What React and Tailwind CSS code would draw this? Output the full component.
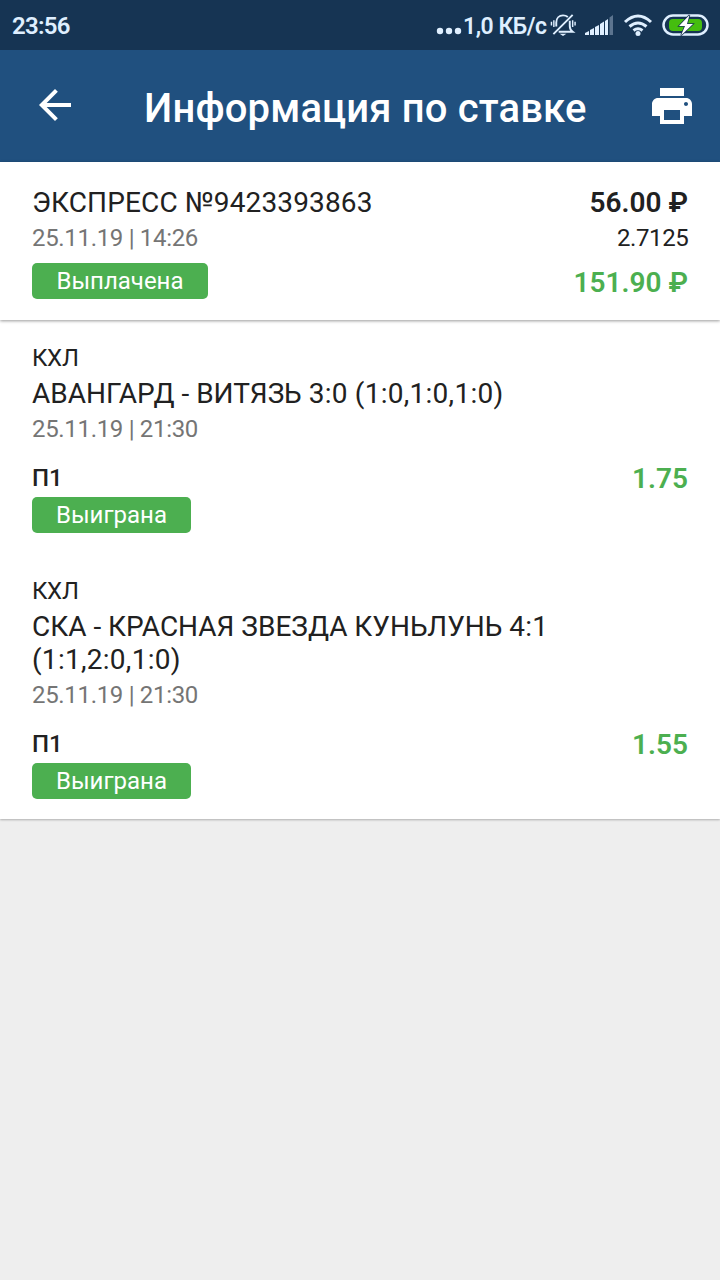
const Status = ({ children, className }) => (
  <span className={`flex h-9 items-center justify-center rounded-[5px] bg-[#4caf50] text-[24px] leading-none text-white ${className}`}>{children}</span>
);

const Event = ({ teams, score, periods, odds, className }) => (
  <section className={`px-8 ${className}`}>
    <div className="text-[24px] leading-7 tracking-[-0.3px]">КХЛ</div>
    <div className="mt-[5px] flex flex-wrap gap-x-[7px] text-[28px] leading-[33px] tracking-[0.28px]">
      <span className="tracking-[-0.01px]">{teams}</span>
      <span>{score}</span>
      <span>{periods}</span>
    </div>
    <div className="mt-[5px] text-[24px] leading-7 tracking-[-0.32px] text-[#757575]">25.11.19 | 21:30</div>
    <div className="mt-[18px] flex h-[34px] items-center justify-between font-medium">
      <span className="text-[24px]">П1</span>
      <span className="pt-[2px] text-[28px] font-semibold text-[#4caf50]">{odds}</span>
    </div>
    <Status className="mt-[2px] w-[159px]">Выиграна</Status>
  </section>
);

const SilentIcon = () => (
  <svg className="ml-[4px]" width="27" height="28" viewBox="0 0 28 28" fill="none" stroke="currentColor" strokeWidth="2">
    <path d="M6.500 15.500V11.500C6.500 7 9.500 4 13.500 4c2 0 3.700.6 5 1.700M20.500 9.500V15c0 2.500 1 4.500 3 6H9M23.500 3.500L3.500 23.500" />
    <path d="M10 23h7l-3.500 2.500z" fill="currentColor" stroke="none" />
    <path d="M4 9v7M1.500 10.500v4M23.500 9v7M26 10.500v4" strokeWidth="1.500" />
  </svg>
);

export default function App() {
  return (
    <div className="flex h-[1280px] w-[720px] flex-col overflow-hidden bg-[#eeeeee] font-[Roboto,sans-serif] text-[#212121]">
      <div className="flex h-[50px] shrink-0 items-center bg-[#163453] pl-3 pr-[11px] text-[#dfefff]">
        <span className="pt-[2px] text-[24px] font-semibold tracking-[-0.75px]">23:56</span>
        <div className="ml-auto flex items-center">
          <svg className="mt-3" width="26" height="10" viewBox="0 0 26 10" fill="currentColor"><circle cx="4" cy="5" r="3.200" /><circle cx="13" cy="5" r="3.200" /><circle cx="22" cy="5" r="3.200" /></svg>
          <span className="w-[84px] whitespace-nowrap pl-px pt-[4px] text-[23px] font-semibold tracking-[-0.5px]">1,0 КБ/с</span>
          <SilentIcon />
          <svg className="ml-[8px]" width="28" height="24" viewBox="0 0 28 24" fill="currentColor"><path d="M0 20l4-2v4H0zM5 17l4-2v7H5zM10 14l4-2v10h-4zM15 11l4-2.500V22h-4zM20 8l3-2v16h-3z" /><path opacity=".35" d="M24.500 4.500L28 2v20h-3.500z" /></svg>
          <svg className="ml-[10px] mr-[9px]" width="30" height="24" viewBox="0 0 30 24" fill="none" stroke="currentColor" strokeWidth="3"><path d="M2 9q13-12 26 0M6.500 13.500q8.500-7 17 0M10.500 17.500q4.500-3.500 9 0" /><circle cx="15" cy="20.500" r="2.500" fill="currentColor" stroke="none" /></svg>
          <svg width="47" height="24" viewBox="0 0 47 24">
            <rect x="1.500" y="2.500" width="44" height="19" rx="9.500" fill="none" stroke="currentColor" strokeWidth="2.500" />
            <rect x="7" y="6" width="33" height="12" rx="4" fill="#45bd0f" />
            <path fill="#fff" stroke="#163453" strokeWidth="1.500" paintOrder="stroke" d="M27.500 2L17 13h6l-4 9.500L31 11h-6z" />
          </svg>
        </div>
      </div>
      <header className="flex h-28 shrink-0 items-center bg-[#20507f] text-white">
        <svg className="-mt-[2px] ml-[31px]" width="48" height="48" viewBox="0 0 24 24" fill="currentColor"><path d="M20 11H7.830l5.590-5.590L12 4l-8 8 8 8 1.410-1.410L7.830 13H20z" /></svg>
        <h1 className="ml-[65px] pt-[6px] text-[40px] font-medium leading-none tracking-[0.16px]">Информация по ставке</h1>
        <svg className="ml-auto mr-6" width="48" height="48" viewBox="0 0 24 24" fill="currentColor"><path d="M19 8H5c-1.660 0-3 1.340-3 3v6h4v4h12v-4h4v-6c0-1.660-1.340-3-3-3zm-3 11H8v-5h8v5zm3-7c-.55 0-1-.45-1-1s.45-1 1-1 1 .45 1 1-.45 1-1 1zm-1-9H6v4h12z" /></svg>
      </header>
      <section className="z-10 flex h-[158px] shrink-0 justify-between bg-white px-8 pt-6 shadow-[0_1px_3px_#0006]">
        <div>
          <div className="text-[28px] leading-[33px] tracking-[0.14px]">ЭКСПРЕСС №9423393863</div>
          <div className="mt-[5px] text-[24px] leading-7 tracking-[-0.32px] text-[#757575]">25.11.19 | 14:26</div>
          <Status className="mt-[11px] w-[176px]">Выплачена</Status>
        </div>
        <div className="text-right font-semibold">
          <div className="text-[28px] leading-[33px]">56.00 ₽</div>
          <div className="-mr-[0.4px] mt-[5px] text-[24px] font-normal leading-7 tracking-[-0.4px]">2.7125</div>
          <div className="mt-[14px] text-[28px] leading-[33px] text-[#4caf50]">151.90 ₽</div>
        </div>
      </section>
      <main className="h-[499px] shrink-0 bg-white pt-6 shadow-[0_1px_2px_#0004]">
        <Event odds="1.75" teams="АВАНГАРД - ВИТЯЗЬ" score="3:0" periods="(1:0,1:0,1:0)" />
        <Event className="mt-11" odds="1.55" teams="СКА - КРАСНАЯ ЗВЕЗДА КУНЬЛУНЬ" score="4:1" periods="(1:1,2:0,1:0)" />
      </main>
    </div>
  );
}
